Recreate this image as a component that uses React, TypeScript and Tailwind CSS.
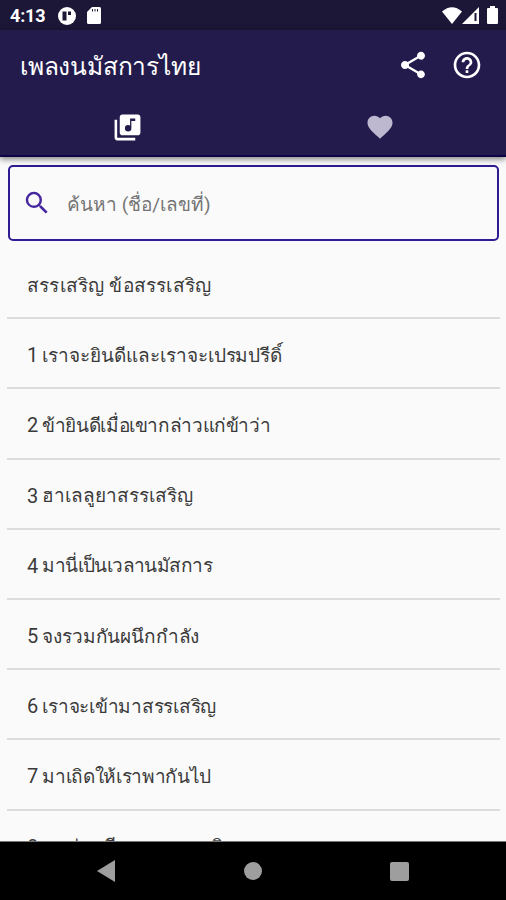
import { MdFavorite, MdHelpOutline, MdLibraryMusic, MdSearch, MdShare } from 'react-icons/md';

const songs = [
  { title: 'สรรเสริญ ข้อสรรเสริญ', tracking: 'tracking-[0.2px]' },
  { number: 1, title: 'เราจะยินดีและเราจะเปรมปรีดิ์', tracking: 'tracking-[-0.04px]' },
  { number: 2, title: 'ข้ายินดีเมื่อเขากล่าวแก่ข้าว่า', tracking: 'tracking-[-0.38px]' },
  { number: 3, title: 'ฮาเลลูยาสรรเสริญ', tracking: 'tracking-normal' },
  { number: 4, title: 'มานี่เป็นเวลานมัสการ', tracking: 'tracking-[-0.58px]' },
  { number: 5, title: 'จงรวมกันผนึกกำลัง', tracking: 'tracking-[-0.15px]' },
  { number: 6, title: 'เราจะเข้ามาสรรเสริญ', tracking: 'tracking-[-0.24px]' },
  { number: 7, title: 'มาเถิดให้เราพากันไป', tracking: 'tracking-[-0.33px]' },
  { number: 8, title: 'ขอท่านมีความสรรเสริญ', tracking: 'tracking-[-0.1px]' },
];

function StatusBar() {
  return (
    <div className="flex h-[30px] shrink-0 items-center justify-between bg-[#1c1637] pl-[10px] pr-[8px] text-white">
      <div className="flex items-center pt-px">
        <span className="w-[48px] text-[18px] font-bold leading-none tracking-[-0.2px]">4:13</span>
        <svg width="18" height="18" viewBox="0 0 18 18">
          <circle cx="9" cy="9" r="9" fill="white" />
          <path d="M4.500 4.500h4v9h-4zM10 4.500h3V8h-3z" fill="#1c1637" />
        </svg>
        <svg className="ml-[11px]" width="14" height="17" viewBox="0 0 14 17">
          <path d="M5 0h7.500Q14 0 14 1.500v14q0 1.500-1.500 1.500h-11Q0 17 0 15.500V5z" fill="white" />
          <path d="M5.500 2v2.500M8 2v2.500M10.500 2v2.500" stroke="#1c1637" strokeWidth="1" />
        </svg>
      </div>
      <div className="flex items-center">
        <svg width="20" height="17" viewBox="0 0 20 17">
          <path d="M0 4.500Q10-4 20 4.500L10 17z" fill="white" />
        </svg>
        <svg width="17" height="17" viewBox="0 0 17 17">
          <path d="M17 0v17H0z" fill="white" />
          <path d="M13.500 6v8" stroke="#1c1637" strokeWidth="2" />
        </svg>
        <svg className="ml-2" width="11" height="18" viewBox="0 0 11 18">
          <path d="M3 0h5v2h2q1 0 1 1v14q0 1-1 1H1q-1 0-1-1V3q0-1 1-1h2z" fill="white" />
        </svg>
      </div>
    </div>
  );
}

function Header() {
  return (
    <header className="z-10 h-[127px] shrink-0 border-b-2 border-[#0d0345] bg-[#241b4d] text-white shadow-[0_2px_6px_rgba(0,0,0,0.5)]">
      <div className="flex h-[69px] items-center justify-between pl-5 pr-[23px]">
        <h1 className="pt-[5px] text-[24.5px] leading-none tracking-[-0.2px]">เพลงนมัสการไทย</h1>
        <div className="flex gap-[22px]">
          <MdShare size={32} />
          <MdHelpOutline size={32} />
        </div>
      </div>
      <div className="grid h-[56px] grid-cols-2">
        <button className="flex items-center justify-center pl-px">
          <MdLibraryMusic size={31} />
        </button>
        <button className="flex items-center justify-center text-[#bdb8cf]">
          <MdFavorite size={30} />
        </button>
      </div>
    </header>
  );
}

function NavBar() {
  return (
    <nav className="z-10 flex h-[59px] shrink-0 items-center justify-between border-t border-[#777] bg-black px-[97px]">
      <svg width="18" height="22" viewBox="0 0 18 22">
        <path d="M18 0v22L0 11z" fill="#9e9e9e" />
      </svg>
      <div className="size-[18px] rounded-full bg-[#9e9e9e]" />
      <div className="size-[19px] rounded-[2px] bg-[#9e9e9e]" />
    </nav>
  );
}

export default function App() {
  return (
    <div className="flex h-[900px] w-[506px] flex-col overflow-hidden bg-[#fafafa] font-['Roboto',sans-serif]">
      <StatusBar />
      <Header />
      <main className="min-h-0 flex-1 overflow-hidden pl-[7px] pr-[6px] pt-[8px]">
        <div className="mx-px flex h-[76px] items-center rounded-[5px] border-2 border-[#301b92] pl-[12px]">
          <MdSearch size={30} className="text-[#4527a0]" />
          <span className="ml-[15px] pt-[3px] text-[19px] leading-none text-[#757575]">ค้นหา (ชื่อ/เลขที่)</span>
        </div>
        <ul className="pt-2">
          {songs.map((song) => (
            <li key={song.title} className="flex h-[70.2px] items-center whitespace-nowrap border-b-[2.5px] border-[#dcdcdc] pl-5 pt-1 leading-none text-[#3a3a3a]">
              {song.number && <span className="mr-1 text-[20px]">{song.number}</span>}
              <span className={`text-[19px] ${song.tracking}`}>{song.title}</span>
            </li>
          ))}
        </ul>
      </main>
      <NavBar />
    </div>
  );
}
